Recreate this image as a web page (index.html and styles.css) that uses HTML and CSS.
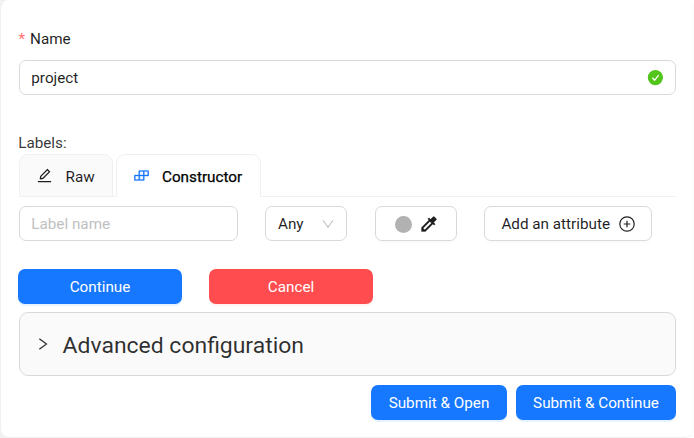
FILE: index.html
```html
<!DOCTYPE html>
<html lang="en">
<head>
<meta charset="utf-8">
<title>Create project</title>
<link rel="stylesheet" href="styles.css">
</head>
<body>
<main class="card">
  <label class="field-label" for="name"><span class="required">*</span><span class="name-text">Name</span></label>
  <div class="input name-input" id="name">
    <span class="value">project</span>
    <svg class="check" viewBox="0 0 16 16"><circle cx="8.4" cy="7.6" r="7.6" fill="#52c41a"/><path d="M5.400 7.800l2.200 2.500L11.600 5.100" fill="none" stroke="#fff" stroke-width="1.3"/></svg>
  </div>
  <div class="labels-title">Labels:</div>
  <nav class="tabs">
    <div class="tab raw">
      <svg class="edit-icon" viewBox="64 64 896 896"><path fill="currentColor" d="M257.700 752c2 0 4-.2 6-.5L431.900 722c2-.4 3.900-1.300 5.300-2.800l423.900-423.900a9.960 9.960 0 000-14.100L694.900 114.900c-1.900-1.900-4.400-2.900-7.100-2.900s-5.200 1-7.100 2.900L256.800 538.800c-1.500 1.500-2.400 3.300-2.800 5.300l-29.500 168.200a33.500 33.500 0 009.400 29.800c6.600 6.400 14.900 9.900 23.800 9.900zm67.400-174.400L687.800 215l73.300 73.300-362.700 362.600-88.900 15.700 15.600-89zM880 836H144c-17.700 0-32 14.300-32 32v36c0 4.400 3.600 8 8 8h784c4.400 0 8-3.600 8-8v-36c0-17.700-14.300-32-32-32z"/></svg>
      <span>Raw</span>
    </div>
    <div class="tab-gap"></div>
    <div class="tab active">
      <svg class="build-icon" viewBox="64 64 896 896"><path fill="currentColor" stroke="currentColor" stroke-width="18" d="M916 210H376c-17.700 0-32 14.300-32 32v236H108c-17.700 0-32 14.300-32 32v272c0 17.700 14.300 32 32 32h540c17.700 0 32-14.300 32-32V546h236c17.700 0 32-14.300 32-32V242c0-17.700-14.300-32-32-32zm-504 68h200v200H412V278zm-68 468H144V546h200v200zm268 0H412V546h200v200zm268-268H680V278h200v200z"/></svg>
      <span>Constructor</span>
    </div>
    <div class="tab-line"></div>
  </nav>
  <div class="constructor-row">
    <div class="input label-name">Label name</div>
    <div class="input any"><span>Any</span><svg class="chevron" viewBox="0 0 12 10"><path d="M1 1.200l5 7 5-7" fill="none" stroke="#bfbfbf" stroke-width="1.100"/></svg></div>
    <div class="input color-button"><span class="swatch"></span><svg class="picker" viewBox="0 0 24 24"><path fill="currentColor" stroke="currentColor" stroke-width=".3" d="M20.710 5.630l-2.340-2.340a1 1 0 00-1.410 0l-3.120 3.120-1.930-1.910-1.410 1.410 1.420 1.420L3 16.250V21h4.750l8.920-8.920 1.420 1.420 1.410-1.410-1.920-1.920 3.120-3.120a1 1 0 00.010-1.420zM6.920 19L5 17.080l8.060-8.060 1.920 1.920L6.920 19z"/></svg></div>
    <div class="input attribute"><span>Add an attribute</span><svg class="plus" viewBox="0 0 16 16"><g fill="none" stroke="currentColor" stroke-width="1.200"><circle cx="8" cy="8" r="7.200"/><path d="M8 4.700v6.600M4.700 8h6.600"/></g></svg></div>
  </div>
  <div class="actions"><div class="button primary">Continue</div><div class="button danger">Cancel</div></div>
  <section class="advanced"><svg class="arrow" viewBox="0 0 10 14"><path d="M1.300 1.700L8.500 7l-7.200 5.300" fill="none" stroke="currentColor" stroke-width="1.200"/></svg><span>Advanced configuration</span></section>
  <div class="submit"><div class="button primary open">Submit &amp; Open</div><div class="button primary continue">Submit &amp; Continue</div></div>
</main>
</body>
</html>
```
FILE: styles.css
```css
* { box-sizing: border-box; }
body { margin: 0; background: linear-gradient(90deg, #f2f2f2 50%, #fff 50%); color: rgba(0, 0, 0, .88); font: 15.25px/24px Roboto, sans-serif; }
svg { display: block; flex: none; }
.card { height: 438px; background: #fff; border: 1px solid #f0f0f0; border-top-color: #fff; border-right-color: #fafafa; border-radius: 9px; padding: 26px 17px 0; overflow: hidden; }
.field-label { display: flex; height: 24px; }
.required { width: 11.5px; margin-left: .5px; color: #ff4d4f; opacity: .8; }
.input { height: 35px; display: flex; align-items: center; border: 1px solid #d9d9d9; border-radius: 7px; padding: 0 12px; background: #fff; white-space: nowrap; }
.name-input { margin: 9px 0 0 1px; padding-left: 11.3px; justify-content: space-between; }
.check { width: 16px; height: 16px; }
.labels-title { margin-top: 36px; height: 23px; padding-left: .2px; color: rgba(0, 0, 0, .8); }
.tabs { display: flex; height: 43px; margin-left: 1px; }
.tab { display: flex; align-items: center; border: 1px solid #f0f0f0; border-radius: 9px 9px 0 0; padding-top: 3px; }
.raw { width: 94px; background: #fafafa; padding-left: 17px; gap: 13.5px; }
.tab-gap { width: 3px; border-bottom: 1px solid #f0f0f0; }
.active { width: 145px; padding-left: 17px; gap: 13px; color: #000; border-bottom-color: #fff; -webkit-text-stroke: .25px #000; }
.edit-icon { width: 15px; height: 15px; margin-bottom: 3px; }
.build-icon { width: 15px; height: 15px; color: #1677ff; margin-bottom: 3px; }
.tab-line { flex: 1; border-bottom: 1px solid #f0f0f0; }
.constructor-row { display: flex; margin: 9px 0 0 1px; }
.label-name { width: 219px; margin-right: 27px; padding-left: 11.3px; color: #bfbfbf; }
.any { width: 82px; margin-right: 28px; justify-content: space-between; }
.chevron { width: 12px; height: 10px; }
.color-button { width: 82px; margin-right: 27px; padding: 0 0 0 19px; box-shadow: 0 2px 0 rgba(0, 0, 0, .02); }
.swatch { flex: none; width: 17px; height: 17px; border-radius: 50%; background: #b2b2b2; margin-top: 1px; }
.picker { width: 20px; height: 20px; margin-left: 6.5px; }
.attribute { width: 168px; padding-left: 16.4px; gap: 8.6px; box-shadow: 0 2px 0 rgba(0, 0, 0, .02); }
.plus { width: 16px; height: 16px; }
.actions { display: flex; gap: 27px; margin-top: 28px; }
.button { height: 35px; width: 164px; border-radius: 7px; color: #fff; display: flex; justify-content: center; align-items: center; white-space: nowrap; }
.primary { background: #1677ff; box-shadow: 0 2px 0 rgba(5, 145, 255, .1); }
.danger { background: #ff4d4f; box-shadow: 0 2px 0 rgba(255, 38, 5, .06); }
.advanced { height: 64px; margin: 8px 0 0 1px; background: #fafafa; border: 1px solid #d9d9d9; border-radius: 9px; display: flex; align-items: center; padding: 3px 0 0 18px; font-size: 22.950px; color: rgba(0, 0, 0, .82); }
.arrow { width: 10px; height: 14px; margin: 0 14.600px 4px 0; }
.submit { display: flex; justify-content: flex-end; gap: 9px; margin-top: 9px; }
.open { width: 136px; }
.continue { width: 160px; }
```
